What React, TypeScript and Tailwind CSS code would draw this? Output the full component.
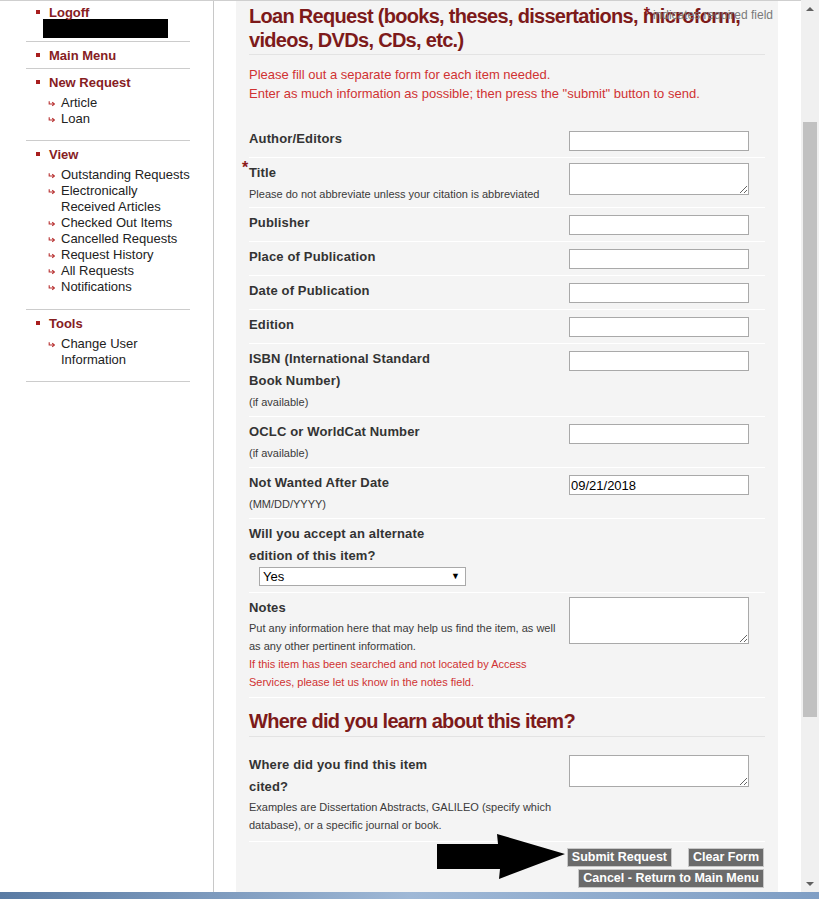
import type { ReactNode } from "react"

const navRed = "text-[#86201f]"

function SubArrow() {
  return (
    <svg width="7" height="7" viewBox="0 0 7 7" className="shrink-0">
      <path d="M1.2 1.2 V4 H6" fill="none" stroke="#b83232" strokeWidth="1.1" />
      <path d="M4.2 2.3 L6.3 4 L4.2 5.7" fill="none" stroke="#b83232" strokeWidth="1.1" />
    </svg>
  )
}

function NavSection({ title, items, pb }: { title: string; items?: ReactNode[]; pb: string }) {
  return (
    <div className={`border-b border-[#cccccc] pt-[6px] ${pb}`}>
      <div className="flex items-center h-[16px]">
        <span className="ml-[10px] w-[4px] h-[4px] bg-[#a81e1e] -mt-[2px]" />
        <span className={`ml-[9px] text-[13px] leading-[16px] font-bold ${navRed}`}>{title}</span>
      </div>
      {items && (
        <ul className="mt-[4px]">
          {items.map((it, i) => (
            <li key={i} className="flex items-start">
              <span className="ml-[22px] mt-[5px]">
                <SubArrow />
              </span>
              <span className="ml-[6px] text-[13px] leading-[16px] text-[#222]">{it}</span>
            </li>
          ))}
        </ul>
      )}
    </div>
  )
}

function Sidebar() {
  return (
    <aside className="w-[214px] shrink-0 border-r border-[#c8c8c8]">
      <nav className="ml-[26px] w-[164px]">
        <div className="border-b border-[#cccccc] pt-[4px] pb-[3px]">
          <div className="flex items-center h-[16px]">
            <span className="ml-[10px] w-[4px] h-[4px] bg-[#a81e1e] -mt-[2px]" />
            <span className={`ml-[9px] text-[13px] leading-[16px] font-bold ${navRed}`}>Logoff</span>
          </div>
          <div className="ml-[17px] -mt-[2px] w-[125px] h-[19px] bg-black" />
        </div>
        <NavSection title="Main Menu" pb="pb-[4px]" />
        <NavSection title="New Request" pb="pb-[13px]" items={["Article", "Loan"]} />
        <NavSection
          title="View"
          pb="pb-[14px]"
          items={[
            "Outstanding Requests",
            <>
              Electronically
              <br />
              Received Articles
            </>,
            "Checked Out Items",
            "Cancelled Requests",
            "Request History",
            "All Requests",
            "Notifications",
          ]}
        />
        <NavSection
          title="Tools"
          pb="pb-[13px]"
          items={[
            <>
              Change User
              <br />
              Information
            </>,
          ]}
        />
      </nav>
    </aside>
  )
}

function TextInput({ value }: { value?: string }) {
  return (
    <input
      type="text"
      defaultValue={value}
      className="block mt-[3px] w-[180px] h-[20px] bg-white border border-[#a9a9a9] px-[1px] text-[13px] text-black outline-none"
    />
  )
}

function TextArea({ h, mt = "mt-[1px]" }: { h: string; mt?: string }) {
  return <textarea className={`${mt} w-[180px] ${h} bg-white border border-[#a9a9a9] block outline-none`} />
}

function Row({
  label,
  sub,
  field,
  pt = "pt-[4px]",
  pb,
  required,
}: {
  label: ReactNode
  sub?: ReactNode
  field?: ReactNode
  pt?: string
  pb: string
  required?: boolean
}) {
  return (
    <div className={`flex border-b border-white ${pt} ${pb}`}>
      <div className="w-[320px] shrink-0">
        <div className="relative text-[13px] leading-[22px] font-bold text-[#333] tracking-[0.15px]">
          {required && (
            <span className="absolute -left-[7px] -top-[5px] text-[16px] text-[#8b1a1a] font-bold">*</span>
          )}
          {label}
        </div>
        {sub}
      </div>
      <div>{field}</div>
    </div>
  )
}

function Sub({ children, lh = "leading-[20px]", color = "text-[#3a3a3a]" }: { children: ReactNode; lh?: string; color?: string }) {
  return <div className={`text-[11px] ${lh} ${color} whitespace-nowrap`}>{children}</div>
}

function Btn({ children }: { children: ReactNode }) {
  return (
    <button className="block h-[19px] px-[4px] bg-[#6b6b6b] border border-[#c8c8c8] text-white text-[12.5px] font-bold leading-[17px] whitespace-nowrap">
      {children}
    </button>
  )
}

function Main() {
  return (
    <main className="relative w-[542px] shrink-0 bg-[#f4f4f4] px-[13px]">
      <div className="absolute top-[7px] right-[5px] flex items-start">
        <span className="text-[16px] leading-[12px] font-bold text-[#8b1a1a]">*</span>
        <span className="ml-[3px] text-[12px] leading-[14px] text-[#7a7a7a]">indicates required field</span>
      </div>
      <h1 className="pt-[3px] pb-[2px] border-b border-[#e3e3e3] text-[20px] leading-[24px] font-bold text-[#7d1a1a] tracking-[-0.7px]">
        Loan Request (books, theses, dissertations, microform,
        <br />
        videos, DVDs, CDs, etc.)
      </h1>
      <div className="mt-[10px] mb-[21px] text-[13px] leading-[19px] text-[#d03232]">
        <p>Please fill out a separate form for each item needed.</p>
        <p>Enter as much information as possible; then press the "submit" button to send.</p>
      </div>

      <Row label="Author/Editors" pb="pb-[6px]" field={<TextInput />} />
      <Row
        required
        label="Title"
        pb="pb-[3px]"
        sub={<Sub>Please do not abbreviate unless your citation is abbreviated</Sub>}
        field={<TextArea h="h-[32px]" />}
      />
      <Row label="Publisher" pb="pb-[6px]" field={<TextInput />} />
      <Row label="Place of Publication" pb="pb-[6px]" field={<TextInput />} />
      <Row label="Date of Publication" pb="pb-[6px]" field={<TextInput />} />
      <Row label="Edition" pb="pb-[6px]" field={<TextInput />} />
      <Row
        label={
          <>
            ISBN (International Standard
            <br />
            Book Number)
          </>
        }
        pb="pb-[4px]"
        sub={<Sub>(if available)</Sub>}
        field={<TextInput />}
      />
      <Row label="OCLC or WorldCat Number" pb="pb-[4px]" sub={<Sub>(if available)</Sub>} field={<TextInput />} />
      <Row label="Not Wanted After Date" pb="pb-[4px]" sub={<Sub>(MM/DD/YYYY)</Sub>} field={<TextInput value="09/21/2018" />} />
      <Row
        label={
          <>
            Will you accept an alternate
            <br />
            edition of this item?
          </>
        }
        pb="pb-[6px]"
        sub={
          <div className="relative ml-[10px] w-[207px]">
            <select className="block appearance-none w-[207px] h-[19px] bg-white border border-[#a9a9a9] px-[3px] text-[13px] leading-[17px] text-black outline-none">
              <option>Yes</option>
              <option>No</option>
            </select>
            <span className="absolute right-[6px] top-[3px] text-[9px] leading-[12px] text-black pointer-events-none">▼</span>
          </div>
        }
      />
      <Row
        label="Notes"
        pb="pb-[6px]"
        sub={
          <>
            <Sub lh="leading-[18px]">
              Put any information here that may help us find the item, as well
              <br />
              as any other pertinent information.
            </Sub>
            <Sub lh="leading-[18px]" color="text-[#d03232]">
              If this item has been searched and not located by Access
              <br />
              Services, please let us know in the notes field.
            </Sub>
          </>
        }
        field={<TextArea h="h-[47px]" mt="mt-0" />}
      />

      <h2 className="pt-[11px] pb-[3px] border-b border-[#e3e3e3] text-[20px] leading-[24px] font-bold text-[#7d1a1a] tracking-[-0.7px]">
        Where did you learn about this item?
      </h2>

      <Row
        label={
          <>
            Where did you find this item
            <br />
            cited?
          </>
        }
        pt="pt-[17px]"
        pb="pb-[7px]"
        sub={
          <Sub lh="leading-[18px]">
            Examples are Dissertation Abstracts, GALILEO (specify which
            <br />
            database), or a specific journal or book.
          </Sub>
        }
        field={<TextArea h="h-[32px]" />}
      />

      <div className="relative mt-[6px] mr-[1px] flex flex-col items-end gap-[2px]">
        <svg className="absolute left-[188px] -top-[14px]" width="130" height="47" viewBox="0 0 130 47">
          <polygon points="0,10 61,10 60,0 128,20 62,45 63,35 0,35" fill="#000" />
        </svg>
        <div className="flex gap-[16px]">
          <Btn>Submit Request</Btn>
          <Btn>Clear Form</Btn>
        </div>
        <Btn>Cancel - Return to Main Menu</Btn>
      </div>
    </main>
  )
}

function Scrollbar() {
  return (
    <div className="w-[18px] shrink-0 bg-[#f0f0f0] flex flex-col items-center">
      <div className="h-[17px] flex items-center justify-center">
        <span className="w-0 h-0 border-l-[4px] border-r-[4px] border-b-[4px] border-l-transparent border-r-transparent border-b-[#606060]" />
      </div>
      <div className="mt-[105px] w-[14px] h-[595px] bg-[#c1c1c1]" />
      <div className="flex-1" />
      <div className="h-[17px] flex items-center justify-center">
        <span className="w-0 h-0 border-l-[4px] border-r-[4px] border-t-[4px] border-l-transparent border-r-transparent border-t-[#606060]" />
      </div>
    </div>
  )
}

export default function App() {
  return (
    <div className="w-[819px] h-[899px] overflow-hidden flex flex-col bg-white font-['Liberation_Sans',Arial,sans-serif]">
      <div className="flex flex-1 min-h-0">
        <div className="flex flex-1 border-t border-[#cfcfcf]">
          <Sidebar />
          <div className="w-[22px] shrink-0" />
          <Main />
          <div className="flex-1" />
        </div>
        <Scrollbar />
      </div>
      <div className="h-[7px] shrink-0 bg-gradient-to-r from-[#5a7ba3] via-[#9fb8d6] to-[#7f9ec4]" />
    </div>
  )
}
